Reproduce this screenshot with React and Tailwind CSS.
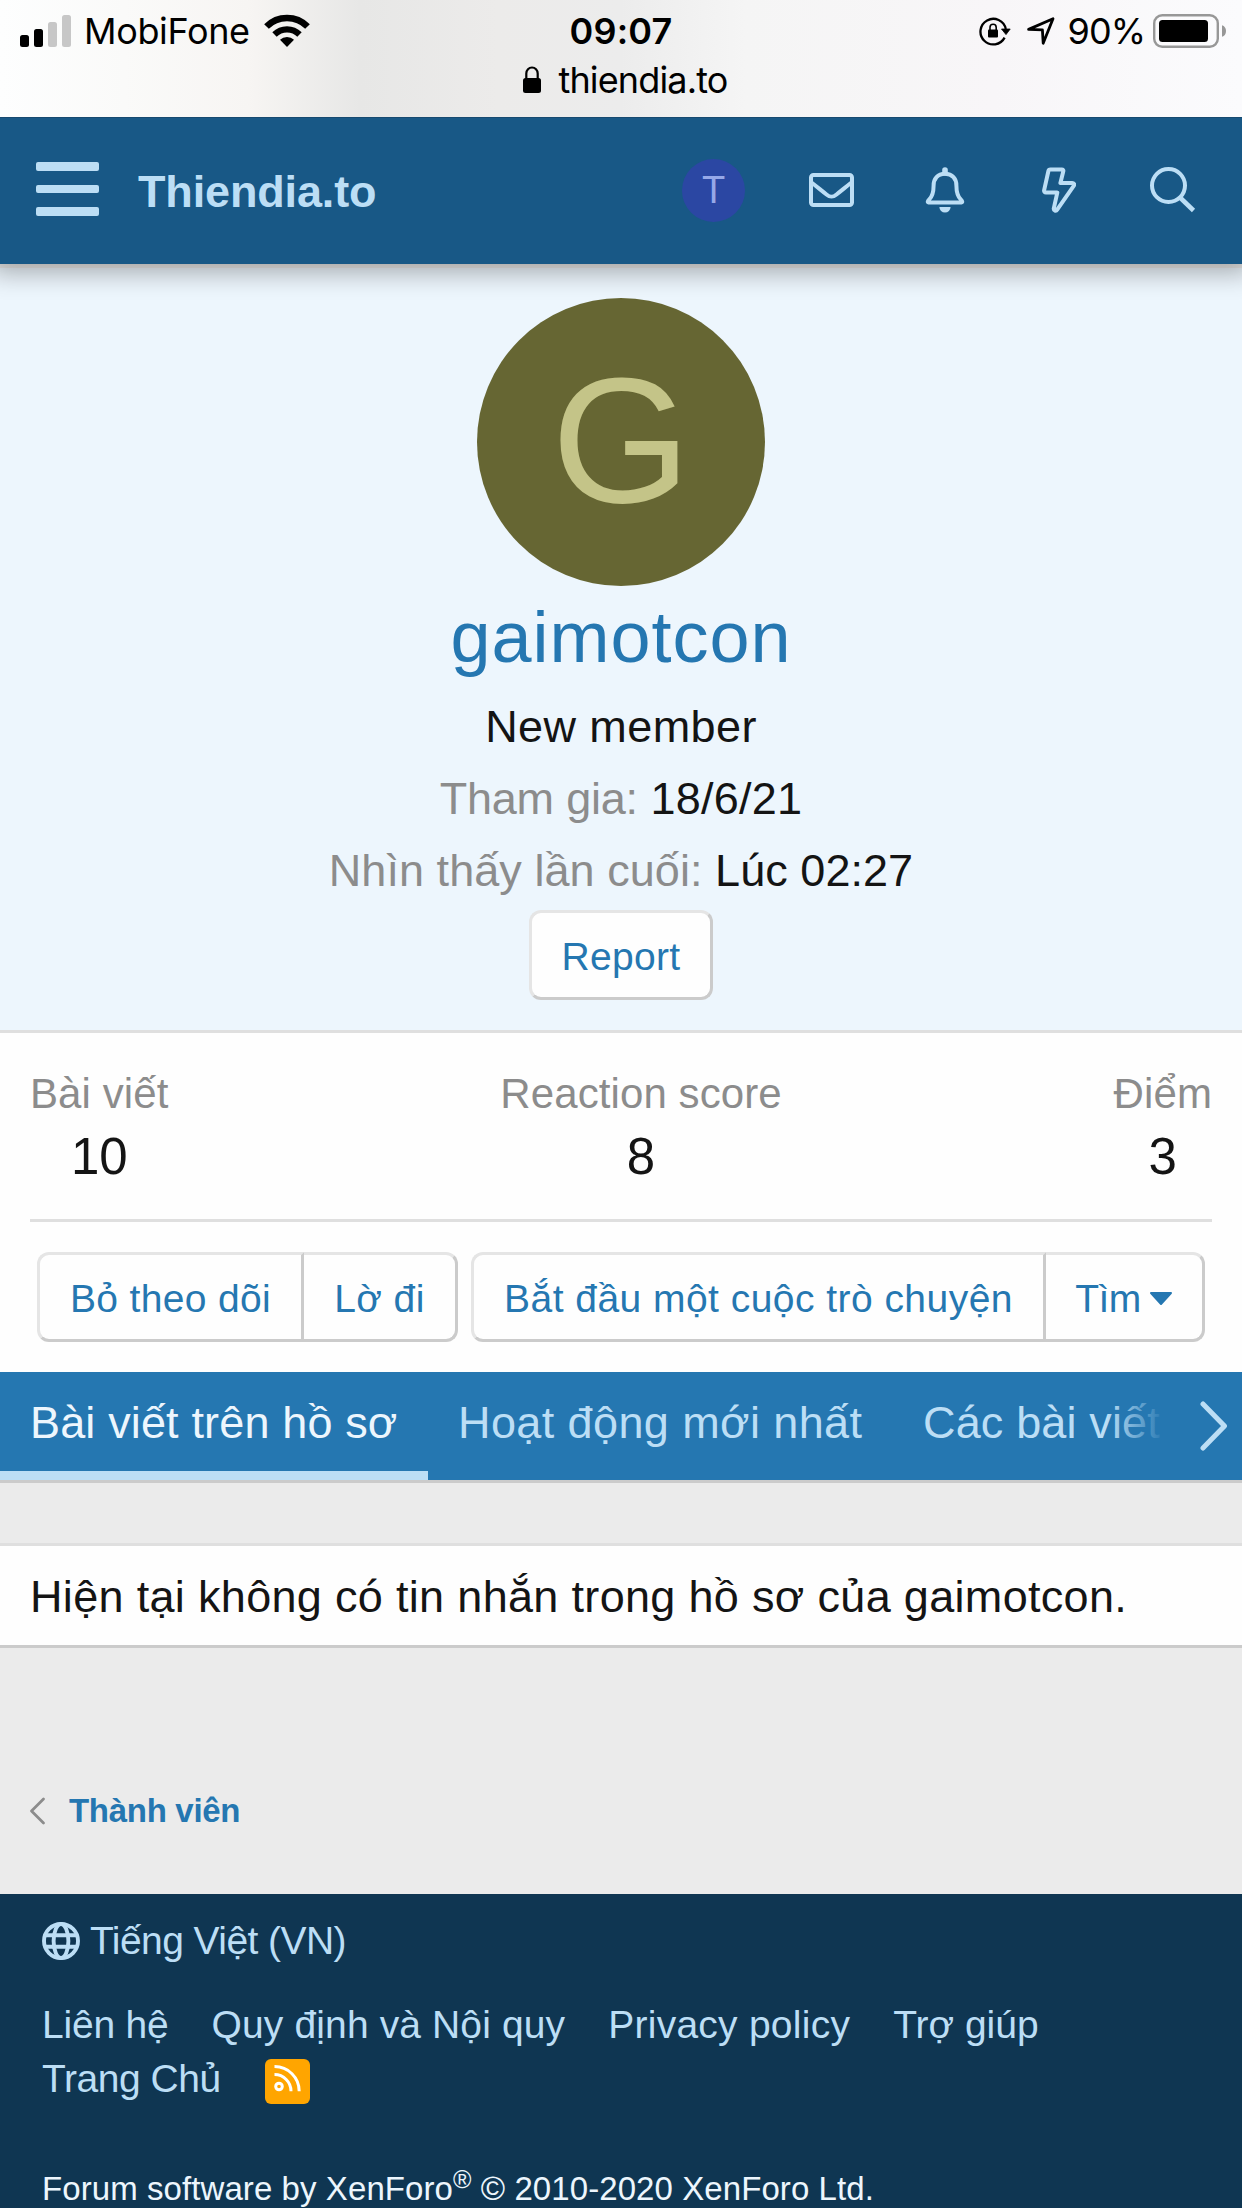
import React from "react";

const stats = [
  { label: "Bài viết", value: "10" },
  { label: "Reaction score", value: "8" },
  { label: "Điểm", value: "3" },
];

const SignalIcon = () => (
  <svg width="52" height="34" viewBox="0 0 52 34">
    <rect x="0" y="21" width="9" height="12" rx="2.5" fill="#000" />
    <rect x="14" y="15" width="9" height="18" rx="2.5" fill="#000" />
    <rect x="28" y="8" width="9" height="25" rx="2.5" fill="#c7c7c7" />
    <rect x="42" y="1" width="9" height="32" rx="2.5" fill="#c7c7c7" />
  </svg>
);

const WifiIcon = () => (
  <svg width="46" height="34" viewBox="0 0 46 34">
    <path d="M2.5 12.5a29 29 0 0 1 41 0" fill="none" stroke="#000" strokeWidth="6.6" />
    <path d="M10.5 20.5a17.7 17.7 0 0 1 25 0" fill="none" stroke="#000" strokeWidth="6.2" />
    <path d="M23 33l-7-7.2a10 10 0 0 1 14 0z" fill="#000" />
  </svg>
);

const LockIcon = () => (
  <svg width="18" height="28" viewBox="0 0 18 28">
    <rect x="0" y="12" width="18" height="15" rx="2.5" fill="#000" />
    <path d="M3.3 13V7.5a5.7 6 0 0 1 11.4 0V13" fill="none" stroke="#000" strokeWidth="2.2" />
  </svg>
);

const RotationLockIcon = () => (
  <svg width="32" height="30" viewBox="0 0 32 30">
    <path d="M25.6 21.6A12.8 12.8 0 1 1 26.8 13" fill="none" stroke="#000" strokeWidth="2.3" />
    <path d="M22.5 13h8.7l-4.2 5.6z" fill="#000" stroke="#000" strokeWidth="0.8" />
    <rect x="9" y="13.4" width="10" height="8" rx="1" fill="#000" />
    <path d="M11 14v-2.6a3.1 3.1 0 0 1 6.2 0V14" fill="none" stroke="#000" strokeWidth="1.6" />
  </svg>
);

const LocationIcon = () => (
  <svg width="28" height="28" viewBox="0 0 28 28">
    <path
      d="M1.6 12.4L26 1.8 16.2 26.2 15.4 12.8z"
      fill="none"
      stroke="#000"
      strokeWidth="2.8"
      strokeLinejoin="round"
    />
  </svg>
);

const BatteryIcon = () => (
  <svg width="74" height="34" viewBox="0 0 74 34">
    <rect x="1.2" y="1.2" width="63.6" height="31.6" rx="8" fill="none" stroke="#979797" strokeWidth="2.4" />
    <rect x="6" y="6" width="49" height="22" rx="3.5" fill="#000" />
    <path d="M69 11.2c2.6.8 4 3 4 5.8s-1.4 5-4 5.8z" fill="#979797" />
  </svg>
);

const EnvelopeIcon = () => (
  <svg width="45" height="34" viewBox="0 0 45 34" fill="none" stroke="#bcdef5" strokeWidth="4">
    <rect x="2" y="2" width="41" height="30" rx="2.5" />
    <path d="M2.5 9.5C8 13.8 13 18 17.5 21.5c3.8 3.1 6.2 3.1 10 0C32 18 37 13.8 42.5 9.5" />
  </svg>
);

const BellIcon = () => (
  <svg width="40" height="46" viewBox="0 0 40 46">
    <path
      d="M20 6.8C12.6 6.8 8.6 12 8.6 18.5c0 8-1.6 11.5-4.6 14.2-1.4 1.4-1.6 2.8-.6 2.8h33.2c1 0 .8-1.4-.6-2.8-3-2.7-4.6-6.2-4.6-14.2C31.4 12 27.4 6.8 20 6.8z"
      fill="none"
      stroke="#bcdef5"
      strokeWidth="4"
      strokeLinejoin="round"
    />
    <path d="M20 6V3" stroke="#bcdef5" strokeWidth="5.6" strokeLinecap="round" />
    <path d="M14.4 40h11.2a5.6 5.6 0 0 1-11.2 0z" fill="#bcdef5" />
  </svg>
);

const BoltIcon = () => (
  <svg width="34" height="46" viewBox="0 0 34 46" fill="none" stroke="#bcdef5" strokeWidth="4" strokeLinejoin="round">
    <path d="M8.4 2.4h11.4c1.2 0 1.800.8 1.5 1.800L18.4 16h11.8c1.7 0 2.5 1.2 1.7 2.6L15.2 42.6c-1.2 1.900-3.800 1-3.400-1.200L15.3 25.6H4c-1.3 0-2.100-.9-1.900-2.200L6.400 4c.2-1 .9-1.600 2-1.600z" />
  </svg>
);

const SearchIcon = () => (
  <svg width="46" height="46" viewBox="0 0 46 46" fill="none" stroke="#bcdef5">
    <circle cx="18.5" cy="18.5" r="16.5" strokeWidth="4" />
    <path d="M30 30.5l13.5 13" strokeWidth="4.6" />
  </svg>
);

const GlobeIcon = () => (
  <svg width="38" height="38" viewBox="0 0 38 38" fill="none" stroke="#bcdef5" strokeWidth="3.9">
    <circle cx="19" cy="19" r="17" />
    <ellipse cx="19" cy="19" rx="7.4" ry="17" />
    <path d="M3 13.2h32M3 24.8h32" />
  </svg>
);

const RssIcon = () => (
  <span className="flex h-[45px] w-[45px] items-start justify-center rounded-[6px] bg-[#ffa500] pt-[6px]">
    <svg width="27" height="27" viewBox="0 0 27 27" fill="none" stroke="#fff" strokeWidth="3">
      <circle cx="5" cy="21.5" r="3.3" />
      <path d="M.5 9.6A16.5 16.5 0 0 1 17 26.2" />
      <path d="M.5 1.6A24.6 24.6 0 0 1 25.2 26.2" />
    </svg>
  </span>
);

const App = () => {
  return (
    <div className="flex h-[2208px] w-[1242px] flex-col overflow-hidden bg-[#ebebeb] font-['Liberation_Sans',sans-serif] text-[45px] text-[#141414]">
      {/* Status bar */}
      <div className="relative z-20 h-[117px] shrink-0 bg-[linear-gradient(90deg,#fdfefe_0%,#fafaf9_10%,#f7f5f3_20%,#e7e7e6_29%,#ecebea_40%,#ececec_50%,#f5f5f5_60%,#f8f6f8_80%,#fbfbfd_100%)] font-[Inter,sans-serif] text-[36px] text-black">
        <div className="grid h-[62px] grid-cols-[1fr_auto_1fr] items-center">
          <div className="flex items-center pl-5">
            <SignalIcon />
            <span className="ml-[12px] tracking-[-0.35px]">MobiFone</span>
            <span className="ml-[14px]">
              <WifiIcon />
            </span>
          </div>
          <span className="font-semibold tracking-[0.2px]">09:07</span>
          <div className="flex items-center justify-end pr-[15px]">
            <RotationLockIcon />
            <span className="ml-[16px]">
              <LocationIcon />
            </span>
            <span className="ml-[13px] tracking-[-1px]">90%</span>
            <span className="ml-[8px]">
              <BatteryIcon />
            </span>
          </div>
        </div>
        <div className="flex h-[36px] items-center justify-center gap-[17px] pl-[9px]">
          <LockIcon />
          <span className="tracking-[-0.85px]">thiendia.to</span>
        </div>
      </div>

      {/* Navigation */}
      <div className="relative z-10 flex h-[147px] shrink-0 items-center border-t border-[#174a70] bg-[#185886] pr-[46px] pb-[2px] pl-[36px] shadow-[0_0_24px_9px_rgba(0,0,0,0.3)]">
        <div className="flex flex-col gap-[14px] pb-[2px]">
          <span className="h-[8.5px] w-[63px] rounded-[2px] bg-[#bcdef5]"></span>
          <span className="h-[8.5px] w-[63px] rounded-[2px] bg-[#bcdef5]"></span>
          <span className="h-[8.5px] w-[63px] rounded-[2px] bg-[#bcdef5]"></span>
        </div>
        <span className="ml-[39px] pt-[3px] font-bold tracking-[-0.15px] text-[#bcdef5]">Thiendia.to</span>
        <div className="ml-auto flex items-center">
          <span className="flex h-[63px] w-[63px] items-center justify-center rounded-full bg-[#2b47a3] text-[38px] text-[#96a8e8]">
            T
          </span>
          <span className="ml-[64px]">
            <EnvelopeIcon />
          </span>
          <span className="ml-[71px]">
            <BellIcon />
          </span>
          <span className="ml-[77px]">
            <BoltIcon />
          </span>
          <span className="ml-[74px]">
            <SearchIcon />
          </span>
        </div>
      </div>

      {/* Profile header */}
      <div className="mt-[4px] flex shrink-0 flex-col items-center border-b-3 border-[#dfdfdf] bg-[#edf6fd] pt-[30px] pb-[30px]">
        <div className="h-[288px] w-[288px] rounded-full bg-[#666633] text-center text-[179px] leading-[285px] text-[#c4c488]">
          G
        </div>
        <div className="text-[72px] leading-[102px] tracking-[1px] text-[#2577b1]">gaimotcon</div>
        <div className="mt-[3px] leading-[72px] tracking-[0.4px]">New member</div>
        <div className="leading-[72px]">
          <span className="tracking-[-0.2px] text-[#8c8c8c]">Tham gia:</span>{" "}
          <span className="tracking-[0.25px]">18/6/21</span>
        </div>
        <div className="leading-[72px] tracking-[0.05px]">
          <span className="text-[#8c8c8c]">Nhìn thấy lần cuối:</span> Lúc 02:27
        </div>
        <button className="mt-[3px] h-[90px] w-[184px] rounded-[12px] border-3 border-t-[#e5e5e5] border-r-[#cbcbcb] border-b-[#cbcbcb] border-l-[#e5e5e5] bg-[#fefefe] pt-[3px] text-[39px] leading-none tracking-[0.3px] text-[#2577b1]">
          Report
        </button>
      </div>

      {/* Stats and actions */}
      <div className="shrink-0 bg-[#fefefe] px-[30px] pt-[31px] pb-[30px]">
        <div className="flex justify-between border-b-3 border-[#dfdfdf] pb-[29px]">
          {stats.map((stat) => (
            <div key={stat.label} className="text-center">
              <div className="text-[42px] leading-[60px] tracking-[0.1px] text-[#8c8c8c]">{stat.label}</div>
              <div className="text-[51px] leading-[66px]">{stat.value}</div>
            </div>
          ))}
        </div>
        <div className="mt-[30px] flex justify-center gap-[13px] text-[39px] leading-none text-[#2577b1]">
          <div className="flex">
            <button className="h-[90px] w-[267px] rounded-l-[12px] border-3 border-t-[#e5e5e5] border-r-[#cbcbcb] border-b-[#cbcbcb] border-l-[#e5e5e5] pt-[3px] tracking-[0.35px]">
              Bỏ theo dõi
            </button>
            <button className="h-[90px] w-[154px] rounded-r-[12px] border-3 border-l-0 border-t-[#e5e5e5] border-r-[#cbcbcb] border-b-[#cbcbcb] pt-[3px] tracking-[0.4px]">
              Lờ đi
            </button>
          </div>
          <div className="flex">
            <button className="h-[90px] w-[575px] rounded-l-[12px] border-3 border-t-[#e5e5e5] border-r-[#cbcbcb] border-b-[#cbcbcb] border-l-[#e5e5e5] pt-[3px] tracking-[0.46px]">
              Bắt đầu một cuộc trò chuyện
            </button>
            <button className="flex h-[90px] w-[159px] items-center justify-center gap-[8px] rounded-r-[12px] border-3 border-l-0 border-t-[#e5e5e5] border-r-[#cbcbcb] border-b-[#cbcbcb] pt-[3px] tracking-[-0.6px]">
              Tìm
              <svg width="24" height="14" viewBox="0 0 24 14">
                <path d="M2 1h20L12 12z" fill="#2577b1" stroke="#2577b1" strokeWidth="2" strokeLinejoin="round" />
              </svg>
            </button>
          </div>
        </div>
      </div>

      {/* Tabs */}
      <div className="relative flex h-[111px] shrink-0 overflow-hidden border-b-3 border-[#cbcbcb] bg-[#2577b1] leading-[97px] whitespace-nowrap text-[#bcdef5]">
        <div className="w-[428px] border-b-9 border-[#bcdef5] pt-[2px] pl-[30px] tracking-[0.15px] text-[#edf6fd]">
          Bài viết trên hồ sơ
        </div>
        <div className="w-[465px] pt-[2px] pl-[30px] tracking-[0.4px]">Hoạt động mới nhất</div>
        <div className="pt-[2px] pl-[30px] tracking-[0.15px]">Các bài viết</div>
        <div className="absolute top-0 right-0 flex h-[108px] w-[135px] items-center justify-end bg-[linear-gradient(90deg,rgba(37,119,177,0)_0%,#2577b1_43%)] pr-[13px]">
          <svg width="30" height="50" viewBox="0 0 30 50">
            <path d="M4 3l21.5 22L4 47" fill="none" stroke="#bcdef5" strokeWidth="5" strokeLinecap="round" strokeLinejoin="round" />
          </svg>
        </div>
      </div>

      {/* Message */}
      <div className="mt-[60px] shrink-0 border-t-3 border-b-3 border-t-[#dfdfdf] border-b-[#cbcbcb] bg-[#fefefe] pt-[2px] pl-[30px] leading-[97px] tracking-[0.32px]">
        Hiện tại không có tin nhắn trong hồ sơ của gaimotcon.
      </div>

      {/* Breadcrumb */}
      <div className="flex h-[246px] shrink-0 items-start gap-[23px] pt-[140px] pl-[29px] text-[33px] leading-[46px] font-bold text-[#2577b1]">
        <svg width="17" height="28" viewBox="0 0 17 28" className="mt-[9px]">
          <path d="M14.5 2L2.5 14l12 12" fill="none" stroke="#8c8c8c" strokeWidth="2.8" strokeLinecap="round" strokeLinejoin="round" />
        </svg>
        <span className="tracking-[-0.3px]">Thành viên</span>
      </div>

      {/* Footer */}
      <div className="grow bg-[#0f3652] pt-[20px] pl-[42px] text-[39px] leading-[54px] text-[#bcdef5]">
        <div className="flex items-center gap-[10px]">
          <GlobeIcon />
          <span className="tracking-[-0.56px]">Tiếng Việt (VN)</span>
        </div>
        <div className="mt-[30px] flex gap-[43px]">
          <span className="tracking-[-0.2px]">Liên hệ</span>
          <span className="tracking-[0.13px]">Quy định và Nội quy</span>
          <span className="tracking-[0.25px]">Privacy policy</span>
          <span>Trợ giúp</span>
        </div>
        <div className="flex gap-[44px]">
          <span className="tracking-[-0.45px]">Trang Chủ</span>
          <span className="pt-[7px]">
            <RssIcon />
          </span>
        </div>
        <div className="mt-[60px] text-[33px] leading-[46px] tracking-[0.08px] text-[#edf6fd]">
          Forum software by XenForo<sup className="text-[25px] leading-none">®</sup> © 2010-2020 XenForo Ltd.
        </div>
      </div>
    </div>
  );
};

export default App;
